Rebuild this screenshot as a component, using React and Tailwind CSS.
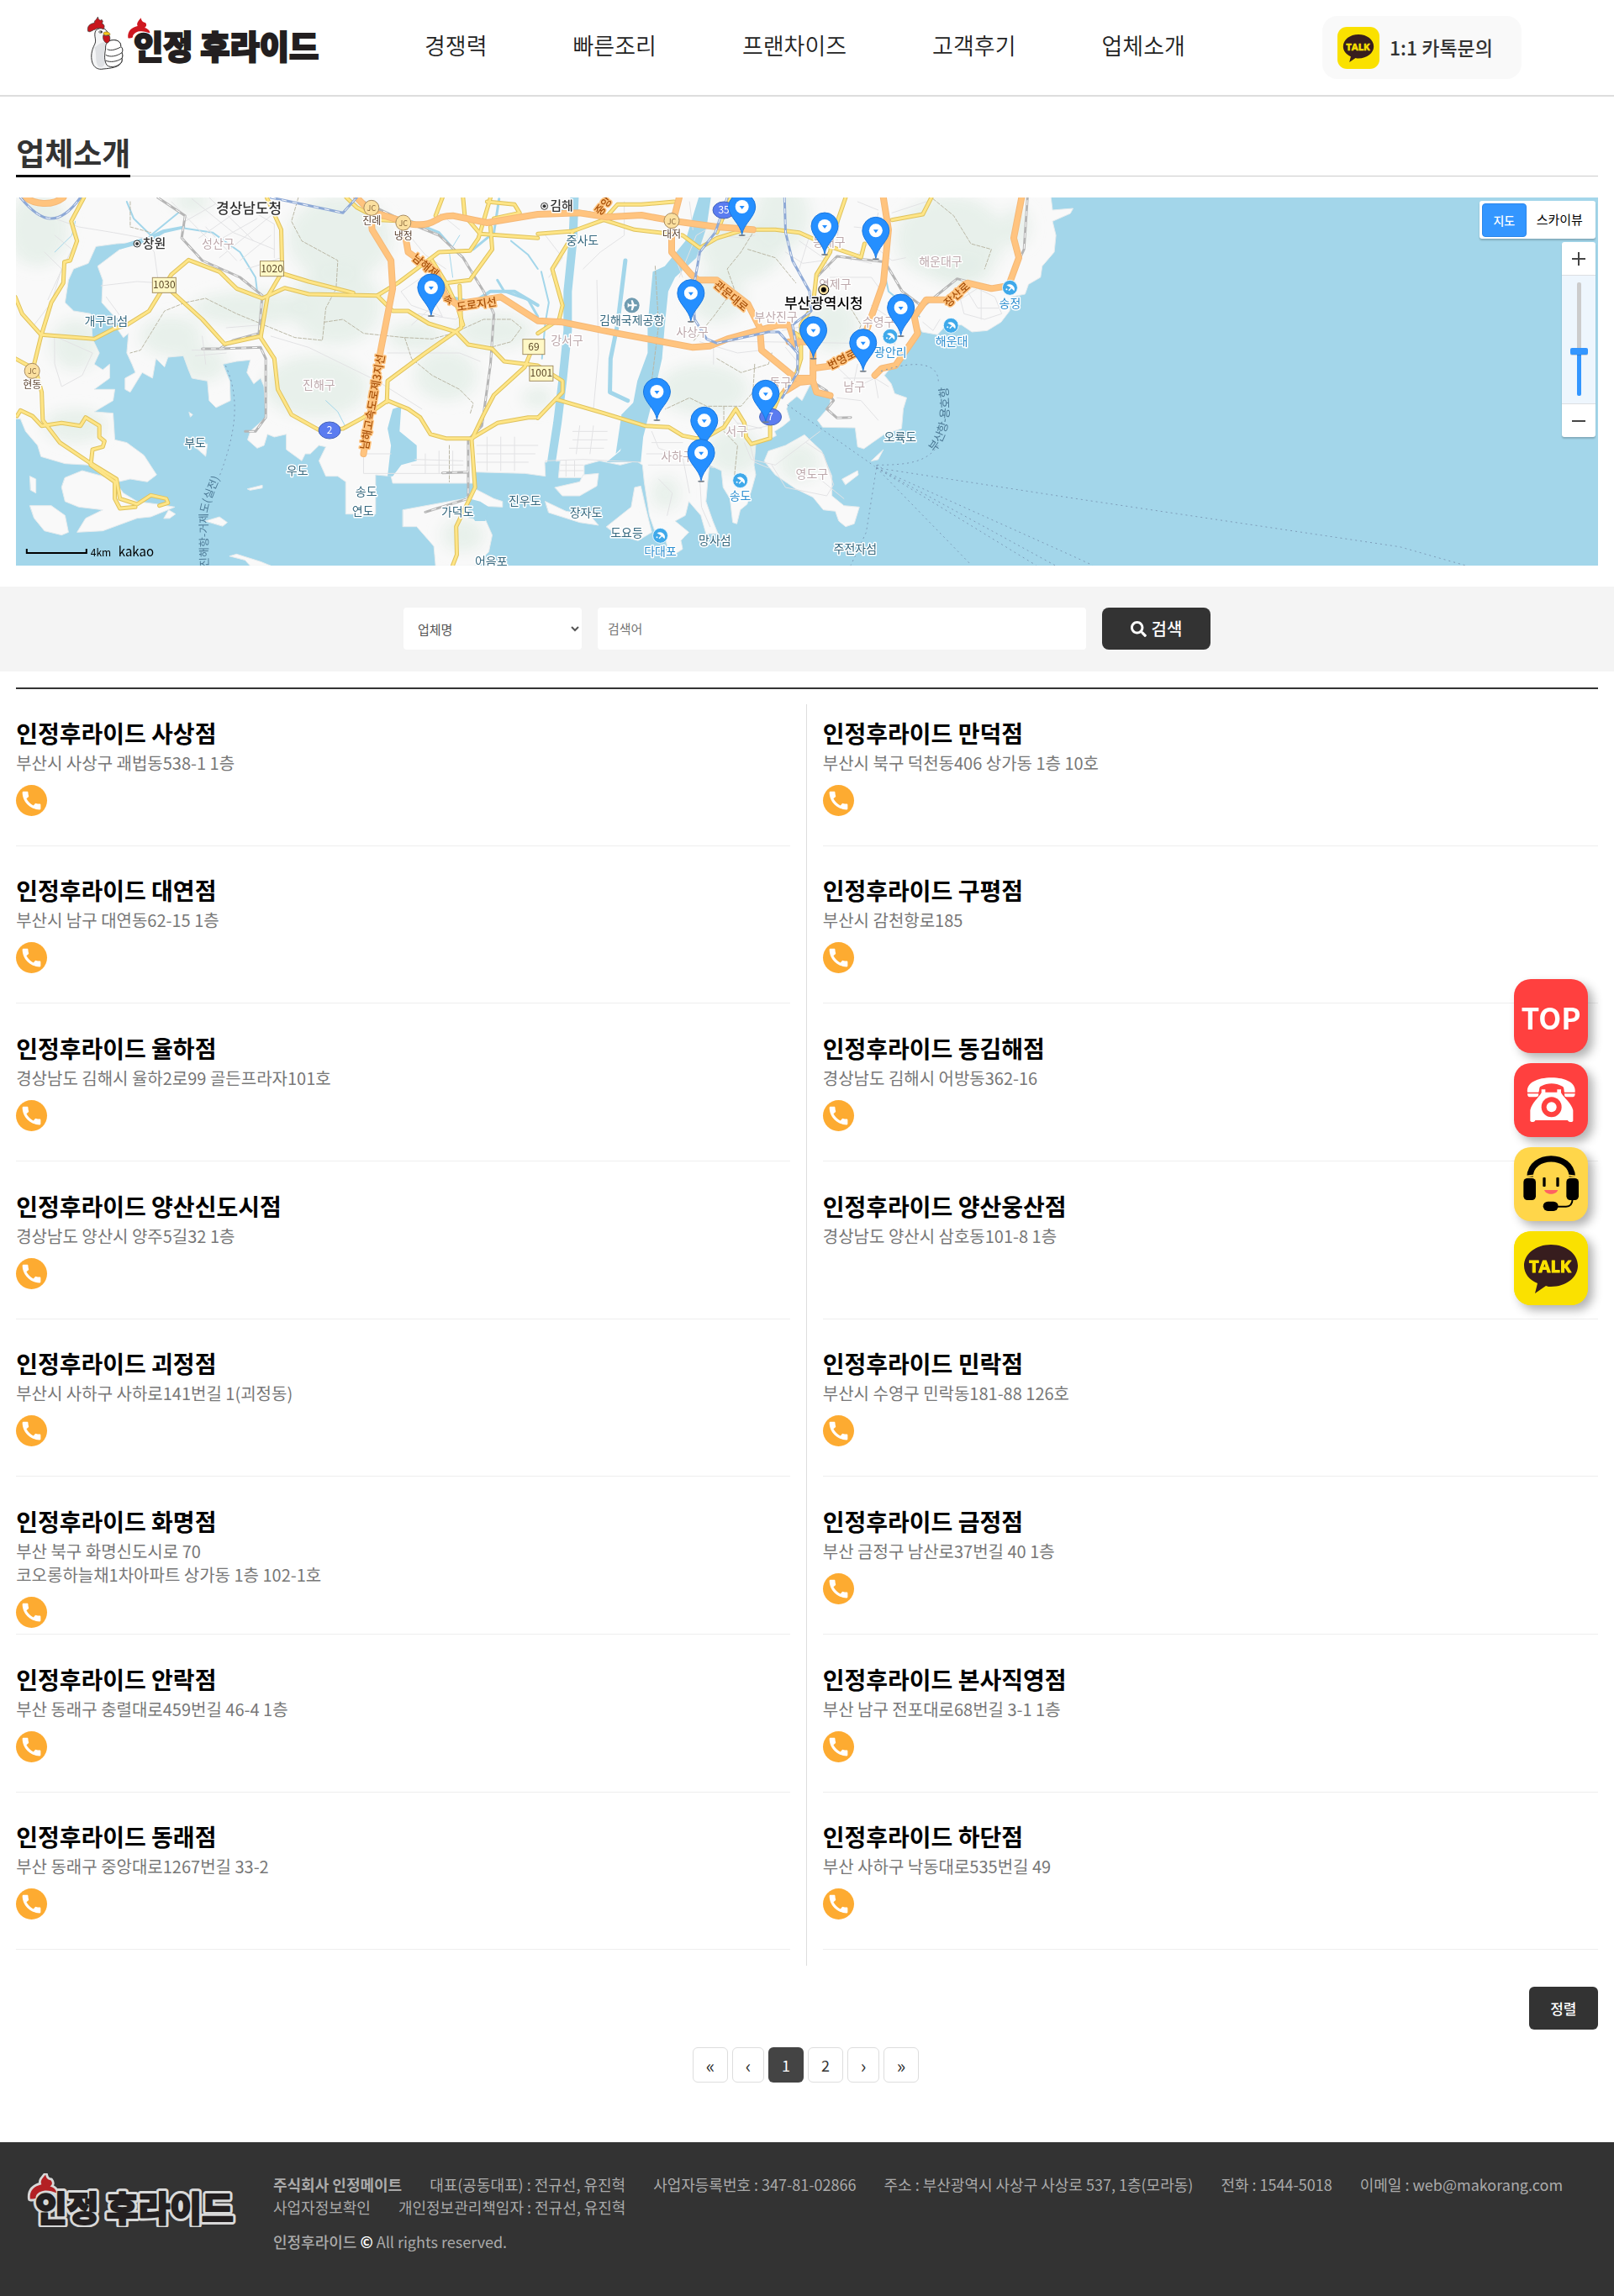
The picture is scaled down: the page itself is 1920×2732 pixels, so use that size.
import React from 'react';
import { MdCall } from 'react-icons/md';
import { FaSearch } from 'react-icons/fa';

const NAV = ['경쟁력', '빠른조리', '프랜차이즈', '고객후기', '업체소개'];

const STORES = [
  ['사상점', ['부산시 사상구 괘법동538-1 1층'], true],
  ['만덕점', ['부산시 북구 덕천동406 상가동 1층 10호'], true],
  ['대연점', ['부산시 남구 대연동62-15 1층'], true],
  ['구평점', ['부산시 감천항로185'], true],
  ['율하점', ['경상남도 김해시 율하2로99 골든프라자101호'], true],
  ['동김해점', ['경상남도 김해시 어방동362-16'], true],
  ['양산신도시점', ['경상남도 양산시 양주5길32 1층'], true],
  ['양산웅산점', ['경상남도 양산시 삼호동101-8 1층'], false],
  ['괴정점', ['부산시 사하구 사하로141번길 1(괴정동)'], true],
  ['민락점', ['부산시 수영구 민락동181-88 126호'], true],
  ['화명점', ['부산 북구 화명신도시로 70', '코오롱하늘채1차아파트 상가동 1층 102-1호'], true],
  ['금정점', ['부산 금정구 남산로37번길 40 1층'], true],
  ['안락점', ['부산 동래구 충렬대로459번길 46-4 1층'], true],
  ['본사직영점', ['부산 남구 전포대로68번길 3-1 1층'], true],
  ['동래점', ['부산 동래구 중앙대로1267번길 33-2'], true],
  ['하단점', ['부산 사하구 낙동대로535번길 49'], true],
];

/* ---------- Map data (survey grid, projected by px / py) ---------- */
const px = (x) => x / 2.45 - 19;
const py = (y) => y / 3 - 15;

const LAND = [
  'M40,40 L3063,40 L3068,90 L3128,84 L3120,102 L3068,130 L3078,180 L3073,240 L3038,290 L3033,330 L2998,355 L2988,390 L2948,400 L2943,450 L2918,490 L2878,520 L2833,525 L2803,500 L2758,500 L2733,535 L2688,525 L2673,495 L2678,530 L2668,560 L2628,620 L2598,650 L2578,680 L2598,710 L2608,745 L2643,760 L2633,800 L2628,870 L2578,890 L2543,920 L2518,942 L2500,935 L2493,867 L2398,865 L2383,840 L2418,790 L2423,755 L2398,745 L2365,705 L2338,770 L2323,755 L2298,780 L2293,800 L2303,840 L2283,860 L2258,880 L2263,895 L2238,910 L2203,925 L2198,1000 L2203,1035 L2193,1080 L2178,1140 L2158,1160 L2148,1210 L2136,1205 L2128,1120 L2108,1080 L2103,1020 L2068,1000 L2063,1060 L2058,1130 L2078,1200 L2093,1245 L2058,1245 L2043,1180 L2008,1130 L1998,1180 L1968,1200 L2008,1240 L1996,1255 L1985,1270 L1990,1300 L1965,1320 L1950,1310 L1940,1265 L1910,1240 L1893,1180 L1878,1060 L1873,1000 L1855,985 L1808,1000 L1748,985 L1703,1000 L1703,1045 L1628,1045 L1633,985 L1588,990 L1590,1040 L1530,1030 L1385,1025 L1385,1065 L1145,1065 L1140,1040 L1095,1035 L1095,1175 L1008,1175 L1008,1060 L985,1040 L950,1040 L930,985 L950,935 L930,930 L905,960 L890,960 L880,985 L835,945 L835,890 L800,900 L780,890 L770,930 L750,940 L722,910 L730,880 L775,830 L770,720 L760,690 L740,710 L720,670 L730,625 L690,630 L650,640 L670,700 L672,770 L630,795 L610,770 L605,700 L560,690 L550,660 L535,610 L490,615 L480,650 L455,620 L445,690 L415,670 L400,700 L380,740 L365,730 L365,690 L395,670 L385,640 L370,600 L375,530 L360,545 L340,510 L370,500 L330,465 L297,420 L300,340 L285,290 L350,230 L400,205 L340,210 L280,220 L258,280 L215,300 L200,340 L190,420 L215,450 L265,460 L270,550 L290,600 L275,640 L300,660 L320,640 L320,690 L275,730 L335,730 L330,770 L275,810 L330,815 L335,910 L370,920 L420,965 L457,1035 L430,1060 L380,1050 L345,1060 L300,1040 L260,1000 L190,995 L120,970 L110,930 L75,880 L60,835 L40,835 Z',
  'M190,1045 L240,1020 L330,1050 L360,1100 L400,1130 L460,1140 L510,1150 L440,1185 L400,1190 L300,1235 L225,1240 L250,1190 L300,1160 L230,1150 L190,1130 L180,1080 Z',
  'M88,1145 L150,1145 L190,1180 L200,1240 L180,1250 L130,1235 L100,1190 Z',
  'M88,1040 L105,1050 L105,1100 L90,1090 Z',
  'M1175,1160 L1355,1120 L1385,1085 L1440,1120 L1465,1130 L1465,1150 L1380,1145 L1365,1190 L1415,1195 L1435,1250 L1425,1310 L1385,1360 L1270,1360 L1265,1290 L1215,1220 L1175,1220 Z',
  'M2228,985 L2240,950 L2290,930 L2345,892 L2395,950 L2425,1040 L2425,1110 L2460,1145 L2505,1150 L2490,1210 L2465,1220 L2445,1200 L2435,1165 L2400,1160 L2370,1115 L2320,1085 L2260,1035 Z',
  'M1768,1220 L1840,1150 L1850,1080 L1868,1075 L1882,1150 L1900,1240 L1860,1270 L1800,1250 Z',
  'M1618,1080 L1690,1060 L1700,1035 L1745,1030 L1740,1075 L1690,1110 L1640,1110 Z',
  'M1590,1130 L1650,1165 L1720,1180 L1745,1215 L1690,1205 L1600,1170 Z',
  'M600,1200 L640,1185 L663,1205 L650,1218 Z',
  'M670,1325 L690,1318 L760,1345 L790,1360 L730,1360 L715,1340 Z',
  'M722,1085 L765,1072 L765,1082 L730,1090 Z',
  'M560,925 L605,925 L600,968 Z M552,812 L562,820 L556,828 Z',
  'M478,1190 L492,1160 L512,1175 L495,1190 Z',
  'M2455,1050 L2500,1020 L2502,1035 L2465,1070 Z M2540,985 L2575,945 L2560,980 Z',
];

const WATER = [
  'M2038,40 L2073,40 L2060,150 L2030,260 L1968,330 L1948,380 L1938,500 L1930,620 L1900,780 L1875,900 L1868,990 L1768,990 L1808,950 L1838,830 L1858,700 L1888,600 L1888,500 L1903,310 L1938,290 L1998,200 L2018,120 Z',
  'M1130,1040 L1140,930 L1130,870 L1145,800 L1170,790 L1165,880 L1215,930 L1215,985 L1170,1000 L1145,1040 Z',
  'M1812,820 L1868,750 L1850,860 L1820,930 L1795,960 Z',
  'M1368,1120 L1400,1130 L1425,1150 L1415,1200 L1385,1200 L1365,1160 Z',
  'M350,215 L440,180 L475,160 L540,145 L540,155 L480,172 L440,200 L350,230 Z',
];

const STREAMS = [
  'M1675,40 L1670,200 L1655,380 L1655,520 L1640,700 L1625,850 L1605,1010',
  'M1568,430 L1500,380 L1430,380 L1380,420 L1310,400',
  'M1568,470 L1540,410 L1470,380 L1450,340',
  'M1455,50 L1440,170 L1380,230 L1330,240 L1280,170 L1200,130',
  'M1578,310 L1600,420 L1590,490 L1580,620',
  'M1823,270 L1800,500 L1780,620 L1778,740 L1830,770',
  'M520,100 L440,180 L390,120 L370,60',
  'M540,155 L620,170 L700,240 L745,330 L750,380',
  'M1320,330 L1310,240 L1340,180',
  'M1570,110 L1650,90 L1720,100',
  'M2578,310 L2590,380 L2640,430 L2680,470',
  'M950,770 L985,810 L1010,870 M220,130 L210,180 L160,240',
  'M1470,130 L1500,110 L1568,100 M1490,200 L1540,250 L1568,300',
];
const STREAM_WIDTHS = [10, 4, 3, 3, 2, 5, 2, 2, 1, 4, 2, 1, 2];

const HILLS = [
  [110, 160, 90, 130], [990, 190, 150, 150], [980, 430, 130, 140], [730, 440, 170, 60], [500, 540, 90, 70],
  [920, 720, 150, 110], [1300, 680, 90, 90], [1440, 520, 110, 60], [220, 860, 90, 60], [220, 570, 70, 90],
  [2160, 230, 120, 110], [2280, 110, 80, 120], [2770, 190, 160, 150], [2430, 500, 70, 90], [2050, 730, 130, 90],
  [2140, 950, 80, 80], [2330, 990, 60, 70], [2090, 400, 80, 90], [590, 640, 70, 60], [1350, 1250, 60, 60],
  [1568, 760, 40, 40], [2800, 300, 90, 60], [560, 60, 50, 40], [1940, 1100, 40, 60], [1210, 540, 80, 50], [2960, 150, 40, 70],
];

const MINOR = [
  'M160,120 L230,150 L330,170 L420,190 L450,240 L460,330 M160,180 L210,230 L170,330 L140,410',
  'M500,60 L620,210 L750,120 M560,50 L680,170 L800,230 M610,45 L740,200 M540,130 L640,60 M580,190 L720,70 M640,260 L790,110',
  'M690,60 L800,140 L800,260 M700,270 L790,180 M720,300 L820,260 M600,150 L690,270',
  'M130,240 L180,300 L150,420 L100,500 M160,540 L270,600 L240,680 L180,720 L160,640 Z',
  'M295,360 L400,345 L465,350 M310,400 L370,500',
  'M560,590 L620,590 L700,560 M570,610 L660,600 M590,540 L600,640 M660,510 L760,500',
  'M790,540 L900,580 L1100,700 L1230,800 M1130,600 L1340,600 L1400,630',
  'M1170,380 L1230,330 L1290,470 L1200,430 Z M1220,460 L1330,480 L1370,420 M1200,500 L1310,380',
  'M1180,160 L1240,250 L1300,300 M1280,100 L1340,160 M1060,960 L1140,960 M1060,970 L1060,1030 L1360,1030',
  'M1200,1000 L1350,1000 M1210,980 L1350,985 M1240,960 L1240,1030 M1280,950 L1280,1030 M1320,950 L1320,1030',
  'M1390,930 L1568,930 M1390,960 L1560,960 M1390,990 L1540,990 M1420,900 L1420,1020 M1460,900 L1460,1020 M1500,900 L1500,1020',
  'M1670,880 L1770,880 M1670,910 L1770,910 M1660,940 L1760,940 M1690,860 L1680,960 M1730,860 L1720,960',
  'M1635,1000 L1700,1000 M1632,1020 L1700,1020 M1650,985 L1650,1040 M1675,985 L1675,1040',
  'M1900,880 L1920,940 L1990,970 L2010,1100 M1885,960 L1960,960 M1890,1000 L2050,1000 L2080,1010 M1900,920 L1990,920',
  'M1945,1180 L1960,1100 L1920,1050 M2040,1050 L2045,1150 L2070,1220 M1590,985 L1700,980 L1868,990',
  'M2040,560 L2150,600 L2220,590 M2080,570 L2080,640 M2130,560 L2220,560 M2290,580 L2330,640 M2220,560 L2480,565',
  'M2290,240 L2340,280 L2400,270 M2330,200 L2400,260 L2420,300 M2360,180 L2330,300 M2460,260 L2540,280 M2450,100 L2440,200 L2420,230',
  'M2480,270 L2540,200 L2560,100 M2500,60 L2560,90 M2490,150 L2560,160 M2420,330 L2540,330 L2570,380 M2560,230 L2600,270 L2640,260',
  'M2440,650 L2500,720 L2550,690 L2590,720 M2460,690 L2540,690 M2440,760 L2510,770 L2560,840 M2550,690 L2560,760 M2500,640 L2490,700',
  'M2850,370 L2900,400 L2920,460 L2870,480 L2810,460 L2800,410 Z M2820,380 L2850,440 L2910,440 M2860,370 L2860,480 M2690,490 L2720,520 L2740,480',
  'M2130,820 L2180,900 L2200,990 L2240,1010 M2160,880 L2240,860 M2150,850 L2220,870 M2170,920 L2190,980 L2260,1000 L2390,880',
  'M2250,1000 L2290,1080 L2410,1110 L2430,1070 L2400,960 L2350,920 M2390,1050 L2460,1120',
  'M1980,330 L2030,180 L2100,130 M2090,180 L2170,190 L2200,180 M1960,230 L1990,330 M2010,60 L2020,160',
  'M1700,300 L1750,240 L1820,180 L1820,60 M1590,180 L1640,260 L1600,330 M1740,340 L1745,600 L1730,800',
  'M2600,100 L2700,60 M2540,430 L2600,480 L2580,560 M2620,520 L2600,600 M2360,430 L2360,500 L2280,520',
];

const BORDERS = [
  'M870,45 L850,130 L880,200 L940,240 L985,270 L980,370 L950,440 L940,555 L860,545 L690,460 L600,405 L540,420 L480,450 L440,530 L410,590 L380,600',
  'M945,490 L1000,480 L1060,530 L1180,545 L1260,550 L1320,530 L1410,480 L1490,480 L1520,510 L1490,560 L1430,580',
  'M1180,545 L1200,620 L1260,680 L1340,730 L1380,780 L1370,820 M380,60 L380,150 L440,170',
  'M2200,160 L2160,240 L2120,300 L2140,370 L2080,470 L2020,560 M2180,230 L2260,260 L2320,350',
  'M2200,640 L2195,740 L2160,790 L2060,790 L2010,760 L1940,800 M2090,620 L2160,670 L2240,640 L2250,600',
  'M2110,790 L2110,880 L2150,930 L2140,1050 M2720,50 L2780,110 L2830,210 L2890,230 L2870,300 M2480,440 L2510,500 L2490,560',
  'M1910,290 L1920,500 L1900,700 M1310,930 L1310,1060',
];

const YELLOW = [
  'M245,45 L208,130 L225,200 L205,270 L188,275 L185,350 L150,420 L120,540 L100,640 L122,740 L125,840 L175,920 L260,990 L340,1050 L350,1120 L400,1140 L440,1108 L485,1120 L490,1135 L465,1145',
  'M45,400 L65,460 L120,535 L275,550 L330,515 L370,500 L435,450 L470,380 L500,320 L550,268 L640,310 L690,370 L765,405 L830,368 L900,390 L1100,395 L1160,350 L1280,240 L1370,235 L1395,190 L1430,45',
  'M45,620 L90,650 M50,825 L60,805 L95,825 L122,860 L180,850 L235,860 L250,830 L290,860 L290,900 L305,915 L300,935 L270,945 L265,1000 L335,1060 L335,1120 L350,1155 L395,1150',
  'M778,45 L820,160 L823,310 L780,400 L760,545 L800,620 L810,730 L850,820 L930,875 L1000,870 L1060,830 L1130,770 L1190,800 L1225,830 L1255,890 L1300,905 L1375,905 L1450,850 L1540,830 L1568,830',
  'M500,380 L590,480 L655,568 L760,540 M820,315 L900,345 L1030,385',
  'M1010,45 L1040,80 L1110,125 L1180,130 M1270,110 L1290,45 M1420,60 L1500,70 L1515,100 L1440,120 M1350,45 L1355,110 L1400,175 L1568,190 M1430,150 L1435,230 L1370,340 L1300,350',
  'M1100,395 L1145,450 L1190,450 L1250,495 L1330,525 L1365,570 L1435,585 L1470,630 L1568,645 L1640,700 L1640,740 L1568,832 M1340,360 L1345,510 L1240,600 L1130,700 L1128,775',
  'M1260,270 L1300,350 L1335,440 L1350,500 M1550,590 L1530,650 L1440,750 L1410,820 L1375,910 L1385,1080 L1330,1220 L1332,1320 L1320,1358',
  'M1568,175 L1670,165 L1760,125 L1850,160 L1990,180 L2040,225 L2090,190 L2170,160 L2260,160 L2330,170 L2420,220 L2510,258 L2520,210',
  'M1568,530 L1630,480 L1640,430 L1610,300 L1660,200 L1670,165 M1760,125 L1800,70 L1870,70 L1965,60',
  'M1620,765 L1760,815 L1880,860 L1950,865 L1990,895 L2030,905 L2060,900 L2110,865 L2145,800 L2170,850 L2175,900 L2190,925 L2245,905 L2245,830',
  'M2465,45 L2430,170 L2420,240 L2380,320 L2370,430 L2335,500 L2335,620 L2320,680 L2270,760 L2245,830 M2715,45 L2690,105 L2600,125',
  'M2130,45 L2090,170 M2320,530 L2370,580 M2300,500 L2330,560',
];

const ORANGE = [
  'M75,45 C100,68 150,78 185,45',
  'M1040,45 L1080,95 L1085,160 L1140,270 L1145,370 L1110,590 L1060,960',
  'M1080,95 L1175,130 L1200,140 C1280,150 1260,110 1320,110 L1420,135 L1568,105 L1690,100 L1770,115 L1870,108 L1960,128 L2090,150 L2195,160',
  'M1175,135 L1190,240 L1270,310 L1300,400 L1330,425 L1460,400 L1568,485 L1640,490 L1800,530 L2020,580 L2070,575 L2120,550 L2270,500 L2300,500 L2320,570',
  'M1980,45 L1958,150 L1958,240 L2015,320 L2035,340 L2090,340 L2180,425 L2215,510 L2220,590 L2320,690 L2370,690 L2370,560 L2300,560',
  'M2290,735 L2330,705 L2370,700 L2380,740 L2420,752 M2370,655 L2430,645 L2490,600 L2520,540 L2575,350 L2590,160 L2575,45',
  'M2550,680 L2570,655 L2610,645 L2675,530 L2665,470 L2700,410 L2760,410 L2820,350 L2890,370 L2940,360 L2970,260 L2955,190 L2978,45',
];

const RAILS = [
  'M460,45 L540,110 L530,190 L590,270 L700,330 L765,395 L755,530 L680,555 L640,585 L590,585 M640,585 L760,580 L775,620 L775,830 L745,880 L715,880',
  'M1060,60 L1180,130 L1280,180 L1350,260 L1410,380 L1440,460 L1430,640 L1405,860 L1365,910 L1365,1120 L1240,1168 M1365,1025 L1290,1028',
  'M2380,330 L2440,255 L2580,275 L2630,380 L2690,435 L2790,335 L2900,370 L2940,350 L2985,230 L2995,45',
  'M2365,700 L2410,735 L2430,770 L2410,800 L2440,832 L2480,830',
];
const METRO = [
  'M60,45 C120,135 170,155 235,45 M790,45 L1000,100 L1040,45',
  'M2120,45 L2085,170 L2040,240 L2020,380 L2025,480 L2060,550 L2090,565 L2240,525 L2270,525 L2325,600 L2325,670 L2280,760',
  'M2287,45 L2290,170 L2310,270 L2360,380 L2365,450 L2310,500 L2325,600',
];

const FERRY = [
  'M658,645 C700,760 690,880 640,1040',
  'M2295,785 L2550,1005 M2568,665 C2680,620 2740,640 2735,710 M2735,930 C2700,990 2650,1000 2550,1000 L2570,1010',
  'M2555,1010 L3136,1120 L4080,1292 L4270,1358',
  'M2555,1010 L2525,1240 L2480,1358 M2555,1010 L2832,1358 M2555,1010 L3020,1358 M2555,1010 L3075,1358 M2555,1010 L3136,1330 L3185,1358',
];

const LABELS = [
  ['경상남도청', 726, 103, 17, 'dark'], ['창원', 450, 226, 15, 'dark'], ['성산구', 636, 226, 14, 'gu'], ['개구리섬', 310, 500, 14, 'sea'],
  ['진례', 1084, 142, 12, 'jc'], ['냉정', 1176, 196, 12, 'jc'], ['현동', 94, 726, 12, 'jc'], ['대저', 1958, 188, 12, 'jc'],
  ['진해구', 930, 729, 14, 'gu'], ['부도', 569, 936, 14, 'sea'], ['우도', 867, 1036, 14, 'sea'], ['송도', 1068, 1109, 14, 'sea'],
  ['연도', 1058, 1180, 14, 'sea'], ['가덕도', 1334, 1181, 14, 'sea'], ['어음포', 1432, 1358, 14, 'sea'], ['진우도', 1530, 1143, 14, 'sea'],
  ['김해', 1637, 90, 15, 'dark'], ['중사도', 1698, 212, 14, 'sea'], ['김해국제공항', 1842, 499, 14, 'sea'], ['강서구', 1653, 570, 14, 'gu'],
  ['사상구', 2018, 539, 14, 'gu'], ['부산진구', 2262, 486, 14, 'gu'], ['동래구', 2417, 218, 14, 'gu'], ['연제구', 2434, 370, 14, 'gu'],
  ['부산광역시청', 2401, 442, 17, 'black'], ['수영구', 2561, 505, 14, 'gu'], ['해운대구', 2742, 287, 14, 'gu'], ['남구', 2490, 735, 14, 'gu'],
  ['동구', 2275, 721, 14, 'gu'], ['서구', 2147, 893, 14, 'gu'], ['사하구', 1974, 983, 14, 'gu'], ['영도구', 2367, 1047, 14, 'gu'],
  ['오륙도', 2624, 915, 14, 'sea'], ['장자도', 1708, 1184, 14, 'sea'], ['도요등', 1827, 1257, 14, 'sea'], ['망사섬', 2084, 1283, 14, 'sea'],
  ['주전자섬', 2493, 1315, 14, 'sea'], ['송도', 2158, 1126, 14, 'beach'], ['다대포', 1925, 1322, 14, 'beach'],
  ['광안리', 2596, 612, 14, 'beach'], ['해운대', 2774, 572, 14, 'beach'], ['송정', 2944, 437, 14, 'beach'],
];
const LABEL_STYLE = {
  dark: 'fill-[#333] stroke-white font-medium',
  black: 'fill-black stroke-white font-medium',
  gu: 'fill-[#bda9ac] stroke-white',
  sea: 'fill-[#35687f] stroke-white',
  jc: 'fill-[#5b4230] stroke-white',
  beach: 'fill-[#2e8fd0] stroke-white',
};
const ROAD_LABELS = [
  ['남해고속도로제3지선', 1088, 775, 13, -80], ['남해제', 1240, 290, 13, 40], ['속', 1306, 410, 12, 20], ['도로지선', 1390, 428, 13, -8],
  ['관문대로', 2130, 398, 13, 40], ['번영로', 2455, 625, 13, -27], ['장산로', 2790, 393, 13, -42], ['중앙', 1760, 76, 13, -52],
];
const JC = [[1083, 82], [1176, 135], [94, 664], [1958, 128]];
const BOXES = [['1020', 793, 299], ['1030', 479, 358], ['69', 1556, 578], ['1001', 1578, 673]];
const OVALS = [['2', 961, 876], ['35', 2110, 90], ['7', 2246, 828]];
const BEACHES = [[2158, 1055], [1925, 1252], [2595, 541], [2772, 502], [2944, 367]];
const PINS = [[1257, 468], [2163, 180], [2404, 249], [2553, 265], [2014, 488], [2626, 540], [2371, 620], [2516, 665], [1915, 840], [2232, 847], [2053, 943], [2044, 1058]];

const Lines = ({ data, className }) =>
  data.map((d, i) => <path key={i} d={d} className={className} vectorEffect="non-scaling-stroke" />);

function MapCanvas() {
  return (
    <svg viewBox="0 0 1882 438" preserveAspectRatio="xMidYMid slice" className="block h-[438px] w-full bg-[#a3d6ea]" role="img" aria-label="업체 위치 지도">
      <defs>
        <filter id="soft" x="-30%" y="-30%" width="160%" height="160%">
          <feGaussianBlur stdDeviation="22" />
        </filter>
        <clipPath id="land">
          {LAND.map((d, i) => <path key={i} d={d} />)}
        </clipPath>
        <path id="ferryWest" d="M229,440 L228,380 Q228,362 252,315" />
        <path id="ferryEast" d="M1093,303 Q1121,270 1104,205" />
      </defs>
      <g transform="translate(-19 -15) scale(0.408163 0.333333)" fill="none" strokeLinejoin="round" strokeLinecap="round">
        <Lines data={LAND} className="fill-[#f9f9f9] stroke-[#e6ecee]" />
        <g clipPath="url(#land)">
          <g filter="url(#soft)">
            {HILLS.map(([x, y, rx, ry], i) => <ellipse key={i} cx={x} cy={y} rx={rx} ry={ry} className="fill-[#e3eee7] opacity-80" />)}
          </g>
        </g>
        <Lines data={WATER} className="fill-[#a3d6ea]" />
        {STREAMS.map((d, i) => <path key={i} d={d} className="stroke-[#a3d6ea]" strokeWidth={STREAM_WIDTHS[i]} vectorEffect="non-scaling-stroke" />)}
        <Lines data={MINOR} className="stroke-[#e2e2e4] stroke-1" />
        <g strokeDasharray="4 2"><Lines data={BORDERS} className="stroke-[#b9b6a4] stroke-1" /></g>
        <Lines data={RAILS} className="stroke-[#b5b5b5] stroke-3" />
        <g strokeDasharray="6 7" strokeLinecap="butt"><Lines data={RAILS} className="stroke-white stroke-1" /></g>
        <Lines data={YELLOW} className="stroke-[#dfc25c] stroke-5" />
        <Lines data={YELLOW} className="stroke-[#fee587] stroke-3" />
        <Lines data={ORANGE} className="stroke-[#f5b877] stroke-8" />
        <Lines data={ORANGE} className="stroke-[#ffc47f] stroke-6" />
        <Lines data={METRO} className="stroke-[#8ea9d6] stroke-3" />
        <g strokeDasharray="6 7" strokeLinecap="butt"><Lines data={METRO} className="stroke-white stroke-1" /></g>
        <g strokeDasharray="2 4" strokeLinecap="butt"><Lines data={FERRY} className="stroke-[#7d9bb8] stroke-1" /></g>
      </g>

      <g textAnchor="middle" paintOrder="stroke" strokeWidth="3" strokeLinejoin="round">
        {LABELS.map(([t, x, y, s, k], i) => (
          <text key={i} x={px(x)} y={py(y)} fontSize={s} className={LABEL_STYLE[k]}>{t}</text>
        ))}
        {ROAD_LABELS.map(([t, x, y, s, r], i) => (
          <text key={i} transform={`translate(${px(x)} ${py(y)}) rotate(${r})`} y="4" fontSize={s} className="fill-[#a8510b] stroke-[#ffc47f] font-medium">{t}</text>
        ))}
      </g>
      <text fontSize="13" className="fill-[#4d7a96]"><textPath href="#ferryWest">진해항-거제도(실전)</textPath></text>
      <text fontSize="14" className="fill-[#4d7a96]"><textPath href="#ferryEast">부산항-용호항</textPath></text>

      {JC.map(([x, y], i) => (
        <g key={i} transform={`translate(${px(x)} ${py(y)})`}>
          <circle r="9" className="fill-[#fbe0a0] stroke-[#a78a5e]" />
          <text y="4" fontSize="9" textAnchor="middle" className="fill-[#8b6a3e]">JC</text>
        </g>
      ))}
      {BOXES.map(([t, x, y], i) => (
        <g key={i} transform={`translate(${px(x)} ${py(y)})`}>
          <rect x={t.length > 2 ? -14 : -13} y="-9" width={t.length > 2 ? 28 : 26} height="18" className="fill-[#fff8c6] stroke-[#a38f63]" />
          <text y="4" fontSize="12" textAnchor="middle" className="fill-[#5c4a2a]">{t}</text>
        </g>
      ))}
      {OVALS.map(([t, x, y], i) => (
        <g key={i} transform={`translate(${px(x)} ${py(y)})`}>
          <ellipse rx="13" ry="10" className="fill-[#5b7cf0] stroke-[#4463b8]" />
          <text y="4" fontSize="12" textAnchor="middle" className="fill-white">{t}</text>
        </g>
      ))}
      {BEACHES.map(([x, y], i) => (
        <g key={i} transform={`translate(${px(x)} ${py(y)})`}>
          <circle r="9" className="fill-[#3fa9ea] stroke-[#eaf6fc]" />
          <path d="M-4,-3 A6,6 0 0 1 5,4 L2,1 L-1,4 L-2,3 L1,0 Z" className="fill-white" />
          <circle cx="-4" cy="2" r="1" className="fill-white" />
        </g>
      ))}
      <g transform={`translate(${px(1842)} ${py(430)})`}>
        <circle r="9" className="fill-[#6f9bb0]" />
        <path d="M-5,-3 L-3,-1 L0,-1 L-1,-6 L1,-6 L3,-1 L6,-1 L6,1 L3,1 L1,6 L-1,6 L0,1 L-3,1 L-5,3 Z" className="fill-white" />
      </g>
      {[[400, 210], [1587, 76]].map(([x, y], i) => (
        <g key={i} transform={`translate(${px(x)} ${py(y)})`}>
          <circle r="4" className="fill-white stroke-[#333]" />
          <circle r="2" className="fill-[#333]" />
        </g>
      ))}
      <g transform={`translate(${px(2401)} ${py(374)})`}>
        <circle r="6" className="fill-[#fbe0a0] stroke-black" />
        <circle r="3" className="fill-black" />
      </g>

      {PINS.map(([x, y], i) => (
        <g key={i} transform={`translate(${px(x)} ${py(y)})`}>
          <ellipse rx="4" ry="1" className="fill-[#77808a]" />
          <path d="M0,-1 C-2,-14 -16,-22 -16,-34 A16,16 0 0 1 16,-34 C16,-22 2,-14 0,-1 Z" className="fill-[#258fff] stroke-[#1a76dd]" />
          <circle cy="-34" r="8" className="fill-white" />
          <path d="M-3,-35 H3 L0,-31 Z" className="fill-[#258fff]" />
        </g>
      ))}

      <path d="M13,418 V423 H84 V418" fill="none" className="stroke-black stroke-2" />
      <text x="89" y="427" fontSize="12" className="fill-black">4km</text>
      <text x="122" y="427" fontSize="15" className="fill-black">kakao</text>
    </svg>
  );
}

function MapControls() {
  return (
    <div className="absolute top-1 right-[3px] flex flex-col items-end gap-1">
      <div className="flex h-[45px] items-center rounded-[3px] bg-white px-[3px] text-sm shadow-[0_2px_2px_rgba(0,0,0,0.2)]">
        <button type="button" className="h-10 w-[53px] rounded-[4px] border border-[#2b86ea] bg-[#3396ff] font-medium text-white">지도</button>
        <button type="button" className="h-10 w-[79px] pb-px text-[15px] text-black">스카이뷰</button>
      </div>
      <div className="flex w-10 flex-col overflow-hidden rounded-[3px] bg-white shadow-[0_2px_2px_rgba(0,0,0,0.2)]">
        <button type="button" aria-label="확대" className="grid h-[39px] place-items-center">
          <svg viewBox="0 0 16 16" className="size-4"><path d="M0,8 H16 M8,0 V16" className="stroke-[#444] stroke-2" /></svg>
        </button>
        <div className="flex h-[154px] items-center justify-center border-y border-[#dcdfe2] bg-[#eef6fd]">
          <svg viewBox="0 0 24 136" className="h-[136px] w-6">
            <rect x="10" y="0" width="5" height="80" rx="2" className="fill-[#ccc]" />
            <rect x="10" y="82" width="5" height="53" rx="2" className="fill-[#3396ff]" />
            <rect x="2" y="79" width="21" height="8" rx="2" className="fill-black/15" />
            <rect x="2" y="78" width="21" height="8" rx="2" className="fill-[#3396ff]" />
          </svg>
        </div>
        <button type="button" aria-label="축소" className="grid h-[39px] place-items-center">
          <svg viewBox="0 0 16 16" className="size-4"><path d="M0,8 H16" className="stroke-[#444] stroke-2" /></svg>
        </button>
      </div>
    </div>
  );
}

const Comb = (props) => (
  <path {...props} d="M172,106 C169,80 185,68 206,63 C200,52 212,42 218,34 C220,46 226,50 234,51 C240,59 237,65 231,69 C240,71 250,78 250,88 C238,84 225,80 213,82 C198,84 188,94 189,103 C184,107 178,107 172,106 Z" />
);

function Logo() {
  return (
    <svg viewBox="0 0 900 240" className="h-20 w-[300px]" role="img" aria-label="인정 후라이드">
      <path d="M56,80 C48,100 62,112 52,130 C42,150 38,170 44,192 C50,212 66,220 84,216 C110,214 138,210 146,196 C152,190 150,184 150,178 C154,170 152,164 150,158 C154,148 150,140 146,136 C148,118 130,110 112,114 C104,120 104,108 102,100 L98,84 C90,66 66,68 56,80 Z" className="fill-[#f4f5f6] stroke-[#333] stroke-3" />
      <path d="M52,140 C62,160 52,185 66,208 C84,214 92,200 88,182 C80,160 96,140 90,120 C76,120 66,130 52,140 Z" className="fill-[#dfe1e4]" />
      <path d="M92,144 C90,128 98,116 112,114 C130,110 148,118 146,136 C154,142 154,152 150,158 C154,166 152,174 150,178 C152,188 148,196 140,200 C124,212 104,210 96,202 C86,186 88,164 92,144 Z" className="fill-white stroke-[#333] stroke-3" />
      <path d="M98,146 C112,154 134,144 146,138 M92,166 C108,176 134,170 150,158 M92,186 C108,194 134,190 150,178" fill="none" className="stroke-[#333] stroke-3" />
      <path d="M29,82 C24,64 36,54 52,52 C50,42 62,40 64,30 C66,40 72,46 78,40 C84,46 82,50 78,54 C88,56 90,66 84,74 C72,68 60,70 54,76 C48,74 46,82 42,80 C38,84 34,84 29,82 Z" className="fill-[#c8161d] stroke-[#333] stroke-2" />
      <path d="M84,88 C92,80 108,84 108,94 C100,96 92,96 86,94 Z" className="fill-[#f8c819] stroke-[#8a6a10] stroke-2" />
      <path d="M84,94 C90,102 102,94 106,98 C110,110 106,122 96,124 C86,120 80,108 84,94 Z" className="fill-[#c8161d] stroke-[#333] stroke-2" />
      <ellipse cx="74" cy="84" rx="6" ry="4" className="fill-white stroke-[#333] stroke-2" />
      <circle cx="76" cy="84" r="3" className="fill-[#222]" />
      <text x="192" y="180" fontSize="115" strokeWidth="6" className="fill-[#231f20] stroke-[#231f20] font-black">인정 후라이드</text>
      <Comb className="fill-[#cf1820]" />
    </svg>
  );
}

function FooterLogo() {
  return (
    <svg viewBox="0 0 252 64" className="h-16 w-[252px] shrink-0" role="img" aria-label="인정 후라이드">
      <g strokeLinejoin="round">
        <g transform="translate(-64 -12) scale(0.4)"><Comb className="fill-[#d8d8d8] stroke-[#d8d8d8]" strokeWidth="14" /></g>
        <text x="11" y="57" fontSize="41" strokeWidth="8" className="fill-[#d8d8d8] stroke-[#d8d8d8] font-black">인정 후라이드</text>
        <text x="11" y="57" fontSize="41" strokeWidth="2" className="fill-[#231f20] stroke-[#231f20] font-black">인정 후라이드</text>
        <g transform="translate(-64 -12) scale(0.4)"><Comb className="fill-[#b32024]" /></g>
      </g>
    </svg>
  );
}

function TalkIcon({ className }) {
  return (
    <svg viewBox="0 0 88 88" className={className} aria-hidden="true">
      <rect width="88" height="88" rx="20" className="fill-[#fae100]" />
      <path d="M44,16 C62,16 76,27 76,41 C76,55 62,66 44,66 C42,66 40,66 38,65 L25,74 L28,62 C18,58 12,50 12,41 C12,27 26,16 44,16 Z" className="fill-[#371d1e]" />
      <text x="43" y="49" fontSize="20" textAnchor="middle" strokeWidth="1" strokeLinejoin="round" className="fill-[#fae100] stroke-[#fae100] font-['Open_Sans'] font-bold">TALK</text>
    </svg>
  );
}

function PhoneIcon() {
  return (
    <svg viewBox="0 0 264 264" className="size-full" aria-hidden="true">
      <path d="M48,104 C44,70 84,52 134,52 C184,52 222,70 218,104 L180,104 C178,96 180,84 170,82 C150,70 118,70 98,82 C88,84 92,96 88,104 Z" className="fill-white" />
      <path d="M48,109 H88 C88,118 84,121 78,121 H56 C50,121 48,116 48,109 Z M180,109 H218 C218,116 216,121 210,121 H188 C182,121 180,118 180,109 Z" className="fill-white" />
      <path d="M98,94 H112 V104 H154 V94 H168 V106 C180,126 204,142 211,168 V206 C210,212 194,212 192,204 H76 C74,212 60,212 58,206 V168 C64,142 86,126 98,106 Z" className="fill-white" />
      <circle cx="134" cy="157" r="36" className="fill-[#ff403f]" />
      <circle cx="134" cy="157" r="18" className="fill-white" />
    </svg>
  );
}

function HeadsetIcon() {
  return (
    <svg viewBox="0 0 264 264" className="size-full" aria-hidden="true">
      <path d="M57,106 C60,20 205,20 208,106" fill="none" className="stroke-black" strokeWidth="22" />
      <path d="M44,104 L72,100 M193,100 L222,104" className="stroke-[#ffd64a]" strokeWidth="5" />
      <rect x="34" y="111" width="44" height="78" rx="14" className="fill-black" />
      <rect x="187" y="111" width="44" height="78" rx="14" className="fill-black" />
      <path d="M209,186 C208,206 200,212 186,212 H150" fill="none" className="stroke-black" strokeWidth="6" />
      <rect x="104" y="194" width="54" height="34" rx="17" className="fill-black" />
      <rect x="103" y="108" width="10" height="33" rx="3" className="fill-black" />
      <rect x="151" y="108" width="10" height="33" rx="3" className="fill-black" />
      <path d="M108,153 H157 C150,172 114,172 108,153 Z" className="fill-[#ff6262]" />
    </svg>
  );
}

const FLOAT = 'grid size-[88px] place-items-center overflow-hidden rounded-[20px] shadow-[6px_6px_12px_rgba(0,0,0,0.3)]';
const PAGE = 'grid h-[42px] place-items-center rounded-[6px] border border-[#ddd] text-[#333]';

function StoreItem({ name, lines, phone, left }) {
  return (
    <li className={left ? 'border-r border-[#ddd] py-[2%] pr-[2%]' : 'py-[2%] pl-[2%]'}>
      <div className="h-[150px] border-b border-[#eee]">
        <h3 className="text-[28px] leading-[30px] font-bold text-black">인정후라이드 {name}</h3>
        <p className="mt-[7px] text-xl leading-7 text-[#777]">
          {lines.map((l) => <span key={l} className="block">{l}</span>)}
        </p>
        {phone && (
          <a href="tel:15445018" aria-label={`${name} 전화`} className="mt-3 grid size-[37px] place-items-center rounded-full bg-[#fdab31] text-white">
            <MdCall className="size-[29px]" />
          </a>
        )}
      </div>
    </li>
  );
}

export default function App() {
  return (
    <div className="bg-white font-['Noto_Sans_CJK_KR','Noto_Sans',sans-serif] text-[#333]">
      <header className="flex h-[115px] items-start border-b-2 border-[#ddd] pr-[110px] pl-[95px]">
        <a href="#home" className="mt-[10px]"><Logo /></a>
        <nav className="ml-[110px] flex h-[108px] items-center gap-[102px] text-[27px] font-[350] text-[#222]">
          {NAV.map((n) => <a key={n} href="#menu" className="whitespace-nowrap">{n}</a>)}
        </nav>
        <a href="#talk" className="mt-[19px] ml-auto flex h-[75px] w-[237px] items-center gap-3 rounded-[18px] bg-[#f9f9f9] pl-[18px] text-[23px] font-medium text-[#333]">
          <TalkIcon className="size-[50px]" />
          1:1 카톡문의
        </a>
      </header>

      <main>
        <div className="mx-[1%] mt-[43px] border-b border-[#ccc]">
          <h2 className="-mb-[2px] inline-block border-b-3 border-black pb-1 align-top text-[37px] leading-[46px] font-bold text-[#333]">업체소개</h2>
        </div>

        <section className="relative mx-[1%] mt-[25px]">
          <MapCanvas />
          <MapControls />
        </section>

        <form className="mt-[25px] bg-[#f4f4f4] pt-[25px] pb-[26px]" onSubmit={(e) => e.preventDefault()}>
          <div className="mx-auto flex h-[50px] w-1/2 max-w-full gap-[19px]">
            <label className="sr-only" htmlFor="field">검색 조건</label>
            <select id="field" className="w-[212px] rounded-[4px] bg-white pl-[13px] text-[15px] text-[#555]">
              <option>업체명</option>
            </select>
            <label className="sr-only" htmlFor="keyword">검색어 입력</label>
            <input id="keyword" placeholder="검색어" className="min-w-0 flex-1 rounded-[4px] bg-white px-3 text-[15px] placeholder:text-[#757575]" />
            <button type="submit" className="flex w-[129px] items-center justify-center gap-[6px] rounded-[8px] bg-[#333] text-xl font-medium text-white">
              <FaSearch className="size-[19px]" />검색
            </button>
          </div>
        </form>

        <section className="mx-[1%] mt-[19px] border-t-2 border-[#333] pt-[18px]">
          <ul className="grid grid-cols-2">
            {STORES.map(([name, lines, phone], i) => (
              <StoreItem key={name} name={name} lines={lines} phone={phone} left={i % 2 === 0} />
            ))}
          </ul>
        </section>

        <div className="mx-[1%] mt-[25px] flex justify-end">
          <button type="button" className="h-[51px] w-[82px] rounded-[6px] bg-[#333] text-[17px] font-medium text-white">정렬</button>
        </div>

        <nav aria-label="페이지" className="mt-[21px] flex justify-center gap-[5px] pr-[3px] text-[18px]">
          <a href="#first" className={PAGE + ' w-[42px] text-[22px]'}>«</a>
          <a href="#prev" className={PAGE + ' w-[38px] text-[22px]'}>‹</a>
          <a href="#p1" aria-current="page" className="grid h-[42px] w-[42px] place-items-center rounded-[6px] bg-[#444] text-white">1</a>
          <a href="#p2" className={PAGE + ' w-[42px]'}>2</a>
          <a href="#next" className={PAGE + ' w-[38px] text-[22px]'}>›</a>
          <a href="#last" className={PAGE + ' w-[42px] text-[22px]'}>»</a>
        </nav>
      </main>

      <footer className="mt-[71px] flex gap-[42px] bg-[#333] pt-[37px] pr-[19px] pb-[51px] pl-[31px] text-[18px] leading-[27px] text-[#aaa]">
        <FooterLogo />
        <div>
          <p className="flex flex-wrap gap-x-[33px]">
            <b className="font-bold">주식회사 인정메이트</b>
            <span>대표(공동대표) : 전규선, 유진혁</span>
            <span>사업자등록번호 : 347-81-02866</span>
            <span>주소 : 부산광역시 사상구 사상로 537, 1층(모라동)</span>
            <span>전화 : 1544-5018</span>
            <span>이메일 : web@makorang.com</span>
            <a href="#biz">사업자정보확인</a>
            <span>개인정보관리책임자 : 전규선, 유진혁</span>
          </p>
          <p className="mt-[14px]"><b className="font-medium">인정후라이드</b> <b className="text-white">©</b> All rights reserved.</p>
        </div>
      </footer>

      <aside className="fixed top-1/2 right-[31px] flex -translate-y-1/2 flex-col gap-3 pb-[14px]">
        <a href="#top" className={FLOAT + ' bg-[#ff403f] text-[35px] leading-none font-bold text-white'}>TOP</a>
        <a href="tel:15445018" aria-label="전화 문의" className={FLOAT + ' bg-[#ff403f]'}><PhoneIcon /></a>
        <a href="#support" aria-label="고객 상담" className={FLOAT + ' bg-[#ffd64a]'}><HeadsetIcon /></a>
        <a href="#talk" aria-label="카카오톡 문의" className={FLOAT + ' bg-[#fae100]'}><TalkIcon className="size-full" /></a>
      </aside>
    </div>
  );
}
